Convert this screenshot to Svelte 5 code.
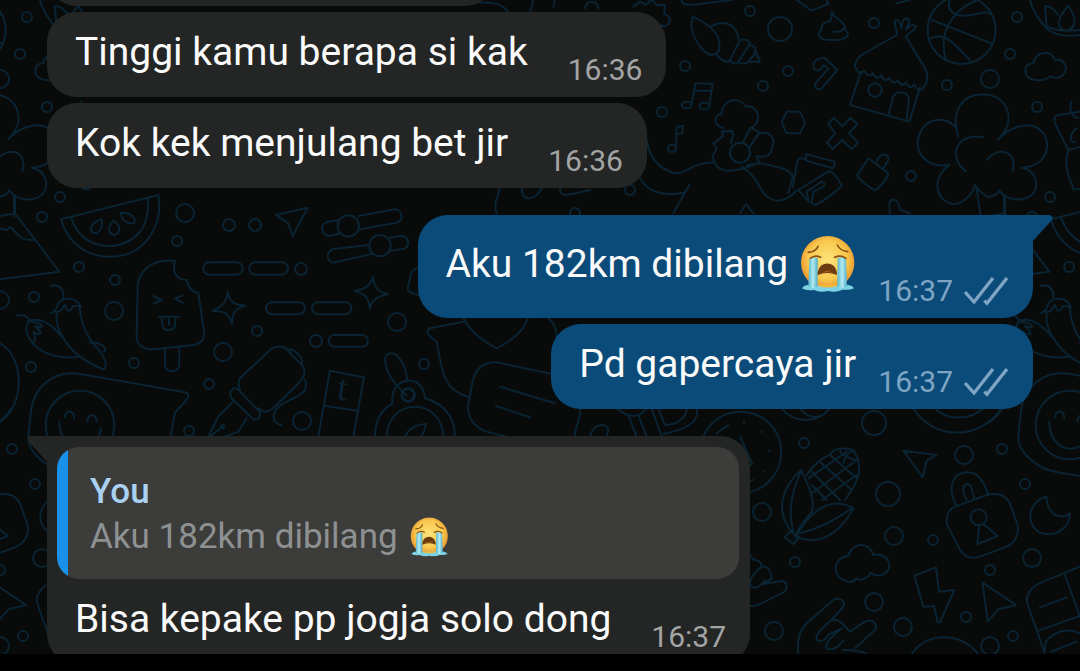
<!--
 * Chat thread
 *
 * Message bubbles over a doodle wallpaper:
 * - incoming bubbles on the left, outgoing bubbles on the right
 * - first bubble of a group carries a tail
 * - a reply shows the quoted message above its own text
 -->
<script lang="ts">
	interface Message {
		text: string;
		time: string;
		out?: boolean;
		first?: boolean;
		sob?: boolean;
		quote?: { author: string; text: string; sob?: boolean };
	}

	const messages: Message[] = [
		{ text: 'Tinggi kamu berapa si kak', time: '16:36' },
		{ text: 'Kok kek menjulang bet jir', time: '16:36' },
		{ text: 'Aku 182km dibilang', time: '16:37', out: true, first: true, sob: true },
		{ text: 'Pd gapercaya jir', time: '16:37', out: true },
		{
			text: 'Bisa kepake pp jogja solo dong',
			time: '16:37',
			first: true,
			quote: { author: 'You', text: 'Aku 182km dibilang', sob: true }
		}
	];

	// The doodle tile repeats horizontally
	const TILE = 990;

	// Loose bubbles between the doodles: [x, y, radius]
	const dots = [
		[750, 11, 5], [780, 29, 12], [874, 23, 5], [685, 66, 5], [788, 71, 5], [763, 86, 5],
		[662, 112, 5], [1017, 17, 5], [1010, 54, 5], [990, 79, 9], [947, 85, 5],
		[1037, 107, 5], [911, 176, 5], [1050, 197, 5], [630, 190, 5], [575, 213, 5],
		[185, 213, 9], [42, 217, 5], [177, 241, 5], [229, 225, 6], [255, 225, 6], [79, 267, 5],
		[115, 280, 5], [34, 297, 5], [114, 311, 9], [0, 300, 9], [257, 331, 5], [223, 352, 9],
		[397, 322, 9], [134, 363, 5], [31, 367, 5], [209, 384, 5], [302, 421, 9], [189, 431, 5],
		[301, 269, 6], [316, 341, 6], [408, 395, 6], [424, 364, 5], [874, 423, 12], [804, 443, 5],
		[964, 455, 9], [1002, 449, 5], [888, 494, 12], [1025, 484, 5], [762, 512, 9],
		[894, 536, 9], [933, 540, 5], [795, 562, 5], [1032, 558, 9], [990, 570, 5],
		[874, 602, 9], [774, 631, 9], [903, 627, 9], [966, 617, 5], [990, 646, 9], [1013, 636, 5]
	];
</script>

{#snippet sobEmoji(size: string)}
	<svg class="emoji {size}" viewBox="0 0 168 170" role="img" aria-label="loudly crying face">
		<use href="#sob" />
	</svg>
{/snippet}

<div class="screen">
	<svg class="wallpaper" viewBox="0 0 1080 654" preserveAspectRatio="xMinYMin slice" aria-hidden="true">
		<defs>
			<radialGradient id="face" cx="0.5" cy="0.45" r="0.55">
				<stop offset="0" stop-color="#fde37a" />
				<stop offset="0.65" stop-color="#f8c94f" />
				<stop offset="1" stop-color="#e8922a" />
			</radialGradient>
			<linearGradient id="tear" x1="0" y1="0" x2="1" y2="0">
				<stop offset="0" stop-color="#4fb4cf" />
				<stop offset="0.5" stop-color="#b5ebf2" />
				<stop offset="1" stop-color="#4cacc8" />
			</linearGradient>
			<symbol id="sob" viewBox="0 0 168 170">
				<circle cx="83" cy="81" r="80" fill="url(#face)" />
				<path d="M6 158Q14 144 40 148H126Q154 144 162 158Q150 164 128 162Q106 172 84 166Q60 172 42 163Q18 166 6 158Z" fill="#7dd3e4" />
				<path d="M54 148H112V151Q84 160 54 151Z" fill="#f0b83e" />
				<path d="M28 70Q40 60 53 68V152Q40 162 25 152Z" fill="url(#tear)" />
				<path d="M113 68Q126 60 138 70L141 152Q128 162 112 152Z" fill="url(#tear)" />
				<path d="M53 118C52 72 112 72 111 118Q82 106 53 118Z" fill="#6c3b10" />
				<path d="M62 114Q82 96 102 114Q82 106 62 114Z" fill="#a55a20" />
				<path d="M25 50Q48 48 54 32M112 28Q120 45 143 48M31 68Q45 56 62 65M104 65Q122 56 138 68" fill="none" stroke="#8a5415" stroke-width="5" stroke-linecap="round" />
			</symbol>
			<g id="doodles">
				{#each dots as [x, y, r]}
					<circle cx={x} cy={y} {r} />
				{/each}

				<!-- Music, shell, flower, hut, ball, tree -->
				<g class="sketch" transform="translate(660 0) scale(0.3333)">
					<path d="M98 55C85 85 110 140 145 163C175 170 185 150 175 115C165 85 130 65 98 50ZM155 78C190 60 230 70 235 115M172 165C185 185 205 190 210 180L240 120C260 115 275 125 268 135L235 185C228 195 215 190 210 180M268 135C285 135 292 150 282 165L265 185C255 195 240 190 235 185M285 150L300 185H265" />
					<path d="M95 312L106 250L158 252L148 315M103 272L155 272M48 440L50 380L70 378L66 400L48 402" />
					<ellipse cx="80" cy="315" rx="15" ry="10" />
					<ellipse cx="133" cy="318" rx="15" ry="10" />
					<ellipse cx="36" cy="445" rx="13" ry="11" />
					<path d="M515 35C520 55 560 65 555 90C575 105 560 120 520 120C470 122 470 100 485 90C480 70 500 65 512 62C518 55 512 45 515 35ZM520 95Q545 98 553 85" />
					<path d="M462 205C455 185 475 170 495 175L532 210L485 265C475 275 460 262 467 250L505 205L490 195C485 215 465 215 462 205" />
					<path d="M710 105L605 165C590 175 580 195 588 205q12 25 25 7q12 25 25 7q12 25 25 7q12 25 25 7q12 25 25 7q12 25 25 7q12 25 25 7q12 25 27 11C808 235 803 220 795 205L738 110M603 215L570 315L748 365L780 262M686 343L698 295C705 270 745 270 747 300L740 362" />
					<path d="M710 105C715 90 700 75 705 62C715 55 722 70 725 85C725 60 735 50 745 58C752 68 740 80 738 90C750 75 760 70 768 80C765 90 745 100 738 110" />
					<circle cx="645" cy="270" r="20" />
					<circle cx="905" cy="90" r="102" />
					<path d="M870 -5C855 45 900 55 950 42C975 35 985 35 995 45M815 60L995 130M955 0C890 20 830 90 858 178M812 115C850 95 880 125 930 182" />
					<path d="M1110 0C1120 40 1150 75 1165 90C1190 108 1230 110 1260 105M1155 18L1160 80C1185 92 1220 95 1260 90M1155 18C1170 18 1185 30 1195 45M1225 18C1185 60 1190 90 1222 92C1255 80 1245 45 1225 18" />
					<path d="M1110 235C1090 225 1090 190 1120 190C1130 150 1175 150 1185 180C1215 175 1230 210 1205 228C1190 240 1175 230 1170 228C1160 242 1130 245 1110 235Z" />
					<path d="M895 410C870 330 910 283 968 283C1040 285 1065 350 1030 400L1015 418C1060 370 1110 370 1135 385C1180 415 1170 500 1085 503C1130 510 1140 560 1115 585C1085 608 1040 600 1018 572C1010 585 995 592 980 590C965 580 955 570 945 555C935 590 900 620 870 610C820 590 820 530 868 495C800 505 765 460 775 415C790 350 860 345 890 385M970 412C890 395 860 470 918 515M983 478C1010 440 1075 450 1058 512M950 565L962 650M1032 590V650" />
					<path d="M1260 335L1195 345C1180 350 1182 360 1186 372L1225 450C1215 480 1218 520 1235 550L1240 568H1260M1225 450L1260 440M1235 305C1225 325 1235 350 1255 355M1250 385C1230 400 1225 430 1245 425" />
					<path d="M190 385C160 375 160 345 185 342C185 300 235 285 258 320C300 315 305 370 275 382M212 430L220 405L215 392L185 395L190 408L160 430L170 445L158 470C165 500 175 510 210 512C240 510 270 500 290 490M248 430L272 382L298 398L268 442M298 400C330 390 350 420 335 445C335 465 315 475 290 468L298 490L262 495" />
					<circle cx="240" cy="458" r="30" />
					<path d="M-40 420C-35 460 -10 510 50 520C80 520 100 485 165 488M-60 535C-40 575 10 590 72 578M88 555L40 640M245 500C310 540 290 590 350 602C370 602 385 595 410 572M300 490C350 500 390 505 398 530L385 580" />
					<path d="M398 560L412 485C415 475 425 472 435 478M438 462L522 485C528 487 522 505 518 505L438 482ZM415 570L500 518C510 510 520 515 545 555C545 565 480 610 465 615C450 612 440 600 415 570ZM445 600L440 575L485 545C500 550 495 560 480 565L460 575L455 610" />
					<path d="M380 335H420L435 367L420 400H380L365 367ZM505 370L522 353L547 380L572 353L592 372L567 400L594 428L575 447L547 420L518 447L502 428L525 400Z" />
					<path d="M625 475L685 520C685 530 655 570 645 570C635 568 592 535 592 525ZM650 485C660 455 690 460 685 480L670 505" />
					<path d="M240 640L258 612L280 640M690 640L688 610C690 595 710 595 715 612L720 630L750 640M65 0C65 15 80 15 100 14L215 0M410 0L455 32L505 12L500 0M710 10L750 0" />
					<path d="M-80 20L-60 5L-42 14L-25 -2L-10 15L15 15L12 42C40 50 30 80 10 78L-10 70M-540 8C-490 5 -465 20 -455 38M-390 38L-380 0M-320 20L-315 0M-225 25C-220 0 -190 0 -185 25M-480 565C-490 600 -500 610 -490 640M-415 565C-415 610 -370 600 -355 565M-300 565C-300 590 -290 590 -210 570" />
				</g>

				<!-- Melon, ice cream, chilies, pen, smiley -->
				<g class="sketch" transform="translate(0 180) scale(0.3333)">
					<path d="M45 50V100L178 275L0 298M0 108L45 100M0 150C10 135 15 160 25 145C35 135 35 150 45 155C60 175 75 182 100 180" />
					<path d="M183 118L475 45C490 130 440 230 330 230C250 230 200 180 183 118ZM213 112C240 190 300 200 340 198C420 185 450 130 443 55M305 118C265 130 265 160 290 160C305 150 308 135 305 118ZM340 122C320 145 325 165 345 165C365 155 360 135 340 122ZM362 98C365 120 380 132 402 130C410 115 395 98 362 98Z" />
					<path d="M525 243C460 235 415 270 413 320L410 470C410 500 440 510 460 508L580 495C605 490 615 475 612 455L595 338C580 338 565 325 560 300C530 300 515 275 525 243ZM495 508V555C497 580 535 580 538 555V503M460 348L485 360L462 370M548 346L525 356L548 368M475 410H538M485 412L487 435C490 455 522 455 525 435L526 412M507 418V435" />
					<path d="M683 335C688 365 700 375 737 377C705 385 695 400 697 432C685 400 675 392 638 393C668 380 680 365 683 335ZM1120 290C1122 325 1135 335 1163 343C1130 350 1115 360 1110 387C1105 350 1095 340 1063 332C1095 328 1110 320 1120 290Z" />
					<rect x="610" y="247" width="118" height="37" rx="18" />
					<rect x="748" y="247" width="116" height="37" rx="18" />
					<rect x="798" y="367" width="117" height="36" rx="18" />
					<rect x="936" y="367" width="118" height="36" rx="18" />
					<rect x="986" y="465" width="118" height="35" rx="17" />
					<path d="M828 105L923 83L878 168L865 130Z" />
					<path d="M1015 120L985 125C955 130 965 168 990 168L1020 160M1075 108L1185 88C1205 88 1215 120 1190 128L1080 148M1107 195L1000 207C975 215 980 250 1005 247L1115 222M1168 173L1205 167C1228 170 1232 200 1210 207L1172 213" />
					<circle cx="1045" cy="138" r="32" />
					<circle cx="1140" cy="197" r="32" />
					<path d="M1250 265L1235 275L1223 325C1222 335 1235 340 1255 345" />
					<path d="M170 400C165 440 190 490 240 530C270 550 300 565 312 568C322 560 318 535 300 515C260 470 245 440 238 380M152 400C165 395 172 385 175 370C190 350 230 350 243 382C230 375 225 380 218 378C210 400 200 395 195 375C185 385 185 400 165 395M152 318C180 310 192 330 190 355M85 425C70 450 85 490 130 515C160 530 200 535 235 530M85 425C110 410 150 425 185 470M50 407C75 400 85 415 92 425M92 425C140 430 130 450 105 438C140 470 110 465 100 455Q110 475 100 490M270 488C300 485 325 505 312 515" />
					<path d="M300 890C240 885 200 880 160 865C100 830 85 800 85 770L92 700C100 620 160 570 240 582L555 637C572 642 570 655 525 697L512 770M195 712C195 688 222 688 223 715M262 725C265 700 288 698 290 725M178 725C180 830 290 830 303 745M0 490C75 530 75 680 0 725" />
					<circle cx="240" cy="735" r="103" />
					<path d="M720 595L810 510C830 495 850 498 860 508L910 560C918 575 912 595 890 615L820 685C800 700 785 695 775 685M720 595Q712 610 720 630M700 625C685 640 690 650 700 660L760 718C775 722 785 710 778 695L718 632C710 625 705 622 700 625ZM700 665L655 710L625 770M740 715L715 755L660 775M630 770L665 742M865 508C890 510 912 535 905 555M915 600C930 640 890 650 850 670C815 690 810 730 845 735" />
					<circle cx="668" cy="740" r="5" />
					<path d="M955 770L990 572L1092 592L1060 770M972 677L1072 692" />
					<text x="1008" y="658" font-size="110" transform="rotate(8 1008 658)">t</text>
					<path d="M1222 605C1220 580 1215 560 1205 545C1185 510 1155 515 1155 540C1158 580 1185 615 1220 645M1178 670C1165 590 1270 575 1275 655M1178 670C1140 690 1125 725 1125 770M1275 655C1330 670 1365 710 1365 770M1160 770C1165 650 1325 650 1330 770M1215 770Q1230 735 1278 732Q1275 755 1260 775" />
					<circle cx="1225" cy="645" r="20" />
				</g>

				<g class="sketch" transform="translate(400 300) scale(0.3333)">
					<path d="M190 55C215 100 250 125 290 145C340 120 375 85 385 50M190 65L90 85C75 92 82 105 110 125C125 200 125 270 205 290M470 110C470 85 460 65 440 50M480 227L290 187C240 185 220 220 215 260L205 310C200 350 220 380 260 395L320 410M300 260L465 310M288 318L390 352M540 320C545 360 520 390 525 410M570 410C580 370 620 365 625 390L620 410M650 325C690 360 720 350 740 325M685 345L710 410M715 345L740 410M755 325L785 410M775 325L795 375C820 375 860 360 860 325M790 402C850 390 900 370 890 325M950 400L985 375" />
				</g>

				<!-- Clock, corn, lock, moon, hands -->
				<g class="sketch" transform="translate(740 400) scale(0.3333)">
					<circle cx="2" cy="157" r="122" />
					<path d="M12 66V69M65 94V97M88 151V154M70 213V216M0 110L37 192L20 200M25 243L40 240" />
					<path d="M125 25C165 72 230 72 270 25M180 25C200 50 225 55 240 48M520 25C580 122 720 122 785 25M585 25C620 62 690 62 730 25" />
					<path d="M182 210C120 270 105 340 160 400M182 210C215 270 225 310 215 335C200 355 180 375 170 400M182 215C150 290 145 340 160 395M170 405C220 320 280 290 340 325C300 400 240 440 165 410M180 400C240 385 300 350 335 325M150 395L178 412L160 432L135 412ZM200 225C220 195 250 170 270 165C280 140 320 145 340 150C350 165 360 190 357 220C350 250 330 280 315 300" />
					<path d="M270 165L350 235M240 185L335 270M210 210L300 300M215 255L260 300M345 180Q300 165 300 150M350 180L215 280M350 225L245 300M320 155L205 235M310 190Q320 150 345 155" />
					<path d="M490 152L590 165L560 182L548 232ZM648 315C620 260 640 217 682 217C715 217 730 240 745 285M680 300C660 265 675 250 685 252C695 255 695 270 703 295M640 322L740 285C780 275 800 290 810 310L833 375C838 410 820 430 800 440L720 470C690 480 665 465 655 440L622 375C617 350 625 330 640 322ZM718 375L712 432L773 408L728 370" />
					<circle cx="716" cy="352" r="24" />
					<path d="M920 290C870 300 850 370 900 398C950 415 990 380 990 340C970 360 920 350 920 290Z" />
					<path d="M310 540C275 525 280 470 325 468C335 425 390 425 400 465C440 455 465 500 435 520C420 532 400 525 392 518C385 535 360 545 350 535C340 548 325 548 310 540" />
					<path d="M523 527L588 502L597 575L643 570L600 667H593L582 618L550 620ZM728 548L828 615L775 628L743 665Z" />
					<path d="M1020 500L910 545C870 560 855 590 862 610L915 762M975 525L1020 650M895 692L1020 648M900 622L980 592M915 750C910 700 980 680 1020 700M935 755L1010 725M515 762C560 695 660 695 715 762" />
					<path d="M175 762C170 720 180 690 200 670L280 600C300 590 320 605 308 622L275 660C300 655 310 675 330 695L375 665C395 655 415 670 405 690L345 745M275 660C250 680 220 710 232 720C245 730 260 715 265 705L305 685C275 710 250 735 260 745C280 755 300 735 310 722M310 750C330 750 360 750 380 762" />
					<path d="M25 458C35 470 35 480 45 480C60 480 65 495 65 500C85 495 95 520 95 535L70 552L125 543C145 545 145 570 125 580L60 612C45 618 30 620 20 618M65 500C45 515 25 540 30 555C45 572 60 560 75 540" />
				</g>
			</g>
		</defs>
		{#each [-TILE, 0, TILE] as shift}
			<use href="#doodles" x={shift} />
		{/each}
	</svg>

	<main class="thread">
		<!-- End of the message scrolled past the top edge -->
		<div class="bubble scrolled"></div>

		{#each messages as message}
			<article class="bubble" class:out={message.out} class:first={message.first}>
				{#if message.first}
					<svg class="tail" viewBox="0 0 20 26" aria-hidden="true">
						<path d="M0 0H16Q22 1 18 6L0 26Z" />
					</svg>
				{/if}
				{#if message.quote}
					<blockquote class="quote">
						<cite>{message.quote.author}</cite>
						<p>
							{message.quote.text}
							{#if message.quote.sob}{@render sobEmoji('small')}{/if}
						</p>
					</blockquote>
				{/if}
				<div class="body">
					<p class="text">
						{message.text}
						{#if message.sob}{@render sobEmoji('large')}{/if}
					</p>
					<div class="meta">
						<time>{message.time}</time>
						{#if message.out}
							<svg class="ticks" viewBox="0 0 138 90" role="img" aria-label="Delivered">
								<path d="M6 48L33 78L90 6M64 74L72 82L132 6" />
							</svg>
						{/if}
					</div>
				</div>
			</article>
		{/each}
	</main>
</div>

<style>
	:global(body) {
		margin: 0;
		background: #000;
	}

	/* Black strip under the thread is the system navigation area */
	.screen {
		position: relative;
		box-sizing: border-box;
		height: 100vh;
		padding-bottom: 17px;
		overflow: hidden;
		background: #090a0a content-box;
		font-family: Roboto, 'Liberation Sans', sans-serif;
	}

	.wallpaper {
		position: absolute;
		top: 0;
		left: 0;
		width: 100%;
		height: calc(100% - 17px);
		fill: none;
		stroke: #0a2433;
		stroke-width: 2;
		stroke-linecap: round;
		stroke-linejoin: round;
	}

	.sketch {
		stroke-width: 6;
	}

	.sketch text {
		font-family: 'Liberation Serif', serif;
		fill: #0a2433;
		stroke: none;
	}

	.thread {
		position: relative;
		box-sizing: border-box;
		display: flex;
		flex-direction: column;
		align-items: flex-start;
		gap: 6px;
		height: 100%;
		padding: 0 47px;
		overflow: hidden;
	}

	.bubble {
		position: relative;
		flex: none;
		border-radius: 30px;
		background: #242625;
		color: #fafafa;
	}

	.bubble.scrolled {
		width: 448px;
		height: 85px;
		margin-top: -79px;
	}

	.bubble.out {
		align-self: flex-end;
		background: #0b4b79;
	}

	.bubble.first {
		margin-top: 21px;
		border-top-left-radius: 0;
	}

	.bubble.out.first {
		border-radius: 30px 0 30px 30px;
	}

	/* Tail points away from the bubble, mirrored for incoming */
	.tail {
		position: absolute;
		top: 0;
		right: 100%;
		width: 20px;
		height: 26px;
		transform: scaleX(-1);
		fill: #242625;
	}

	.out .tail {
		right: auto;
		left: 100%;
		transform: none;
		fill: #0b4b79;
	}

	.body {
		display: flex;
		align-items: flex-end;
		justify-content: space-between;
		gap: 40px;
		padding: 0 24px 0 28px;
	}

	.out .body {
		gap: 22px;
	}

	p {
		margin: 0;
	}

	.text {
		display: flex;
		align-items: center;
		gap: 12px;
		padding: 16px 0 21px;
		font-size: 39px;
		line-height: 48px;
	}

	.meta {
		display: flex;
		align-items: center;
		gap: 10px;
		padding-bottom: 9px;
		font-size: 30px;
		line-height: 36px;
		color: #a3a4a4;
	}

	.out .meta {
		color: #7fa5c4;
	}

	.ticks {
		width: 46px;
		height: 30px;
		fill: none;
		stroke: currentColor;
		stroke-width: 10;
	}

	/* Accent bar keeps a straight inner edge inside the rounded corners */
	.quote {
		box-sizing: border-box;
		margin: 0 11px 0 10px;
		padding: 22px 24px 20px 33px;
		border-radius: 22px;
		background: linear-gradient(to right, #1a91e8 11px, #3c3c3a 11px);
		color: #8e9192;
		font-size: 35px;
		line-height: 45px;
	}

	.bubble:has(.quote) {
		padding-top: 11px;
	}

	.quote cite {
		display: block;
		color: #a9d2f2;
		font-style: normal;
		font-weight: 500;
	}

	.quote p {
		display: flex;
		align-items: center;
		gap: 12px;
	}

	.emoji {
		flex: none;
	}

	.emoji.large {
		width: 56px;
		height: 66px;
	}

	.emoji.small {
		width: 39px;
		height: 40px;
	}
</style>
